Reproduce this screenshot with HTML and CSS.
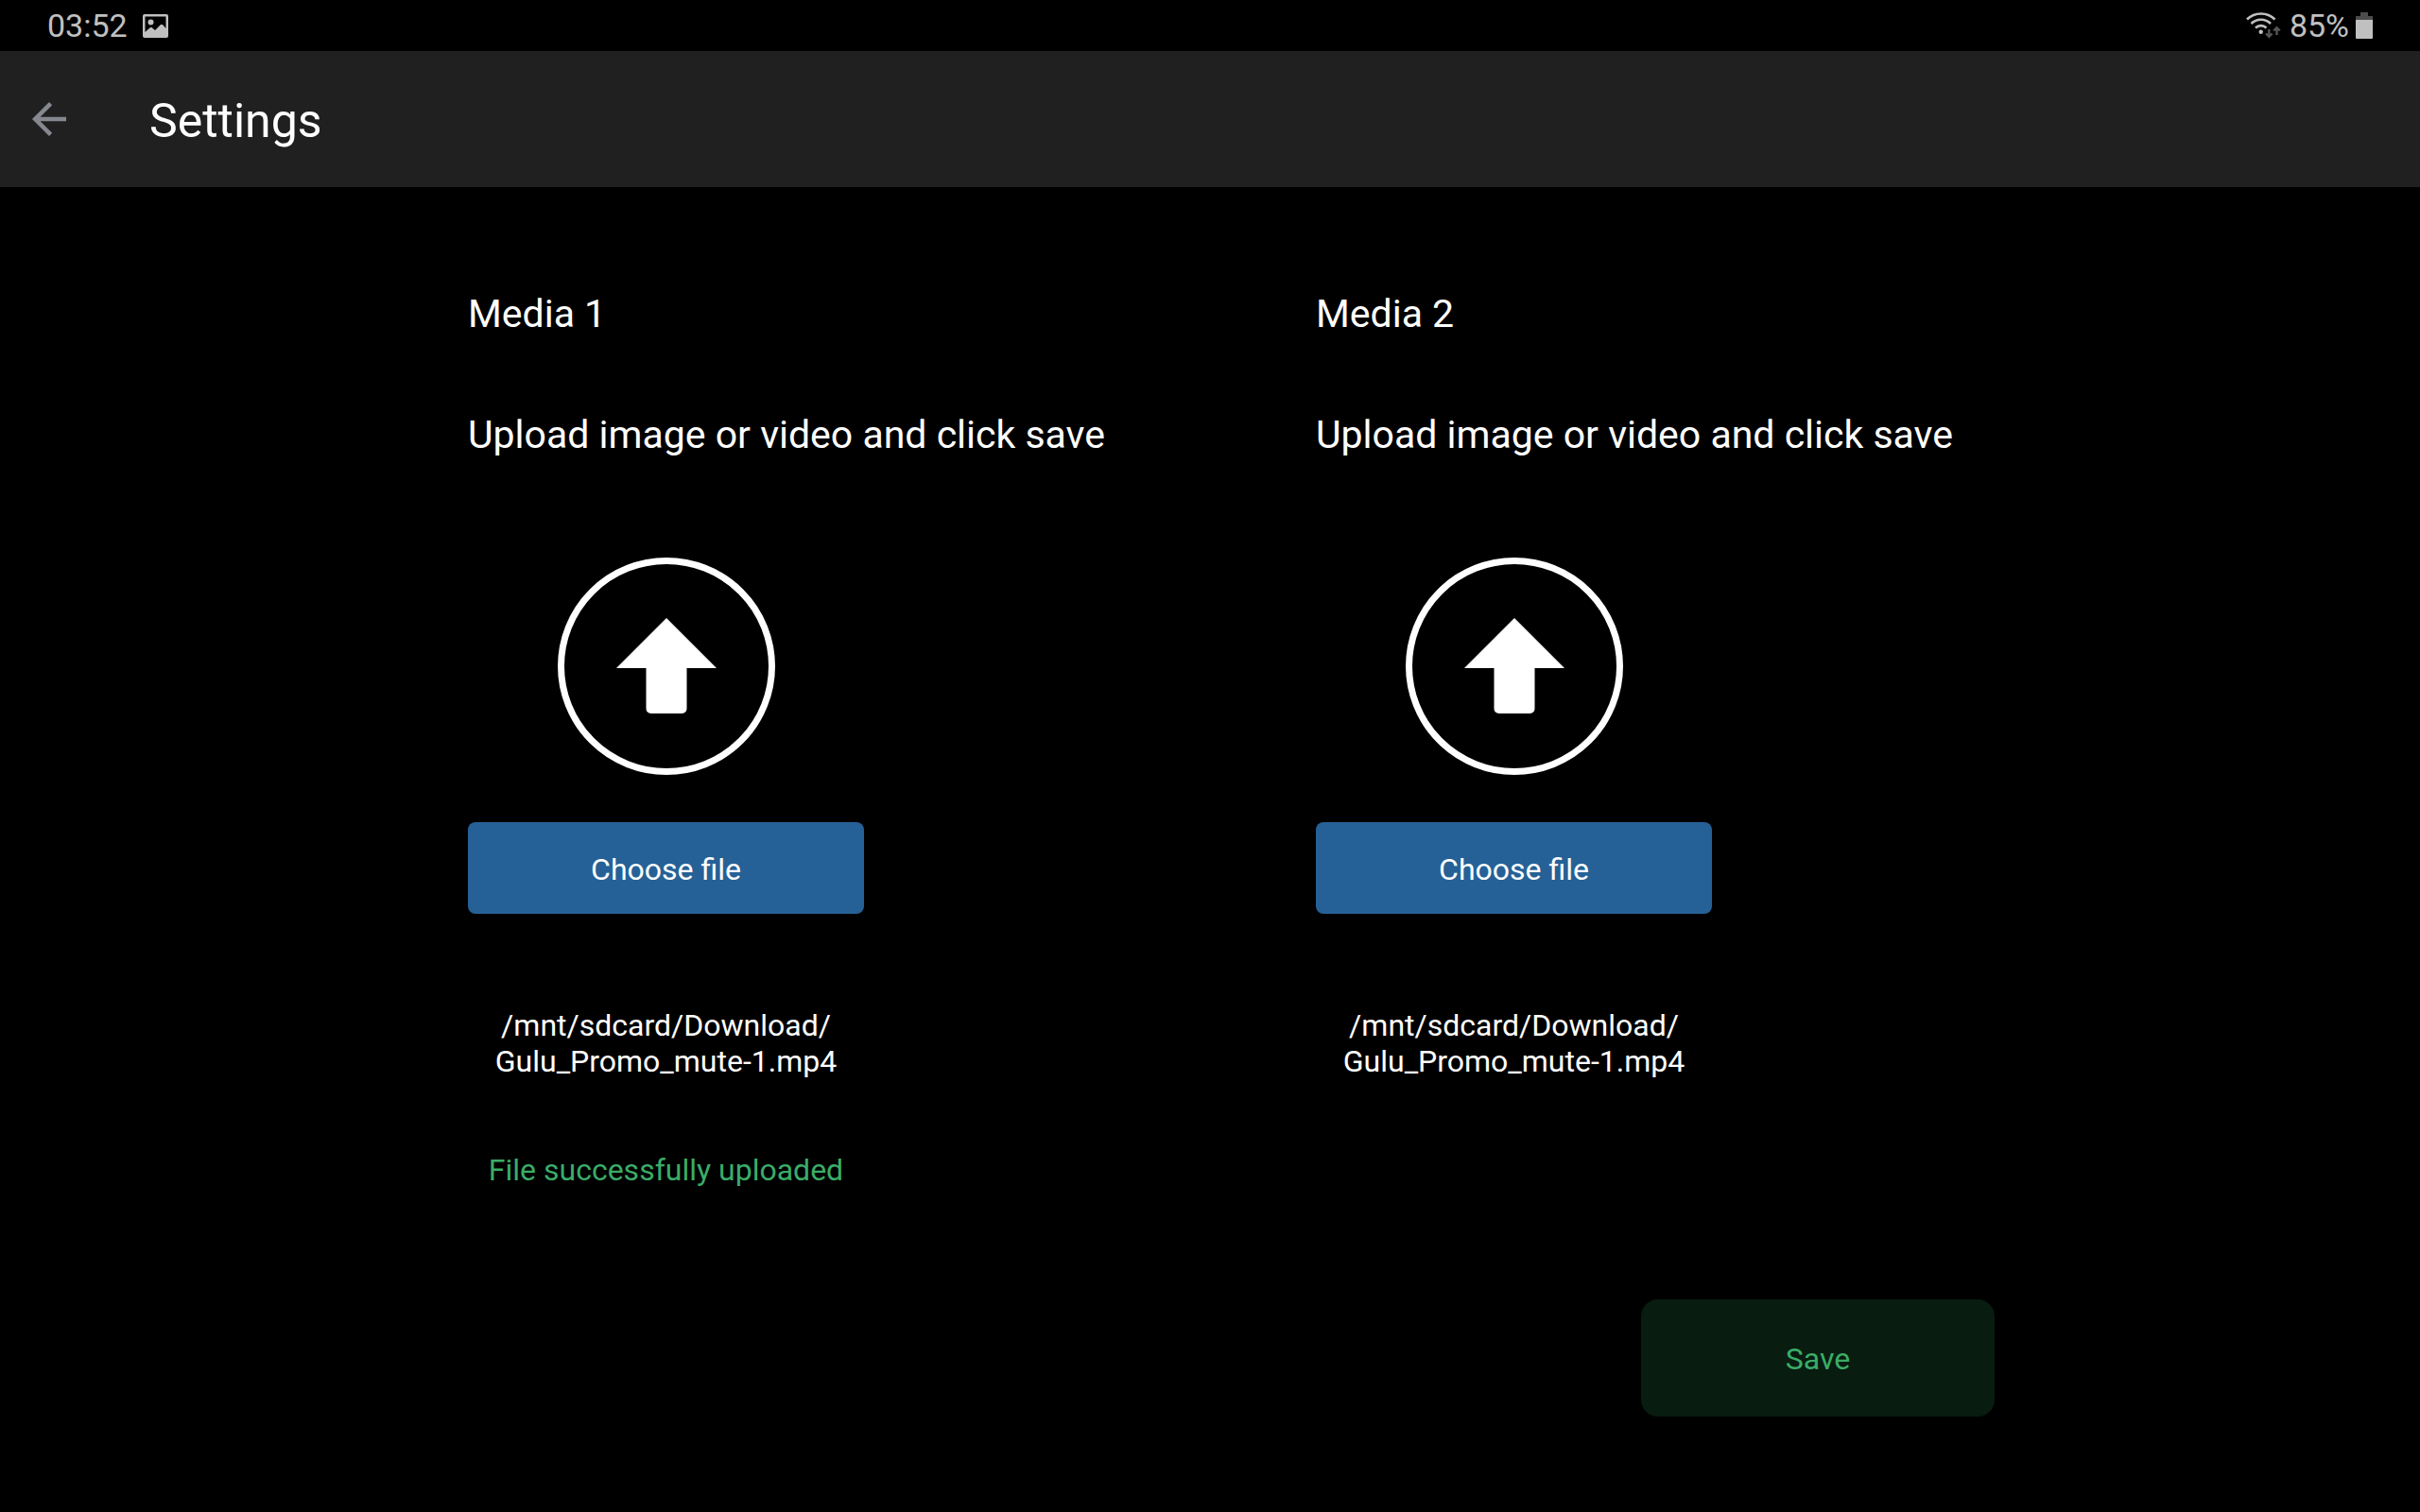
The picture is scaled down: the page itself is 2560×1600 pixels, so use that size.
FILE: index.html
```html
<!DOCTYPE html>
<html lang="en">
<head>
    <meta charset="UTF-8">
    <meta name="viewport" content="width=device-width, initial-scale=1.0">
    <title>Settings</title>
    <link rel="stylesheet" href="styles.css">
</head>
<body>
    <div class="status-bar">
        <div class="status-group">
            <span>03:52</span>
            <svg class="picture-icon" viewBox="0 0 27 25" width="27" height="25">
                <path fill="#c0c0c0" fill-rule="evenodd" d="M2 0h23a2 2 0 0 1 2 2v21a2 2 0 0 1-2 2H2a2 2 0 0 1-2-2V2a2 2 0 0 1 2-2zM2.500 2.500v16.500l5.500-5 1.500 0 3.500 3 6-6 2 0 3.500 4V2.500z"/>
                <circle cx="8.500" cy="8.500" r="3" fill="#c0c0c0"/>
            </svg>
        </div>
        <div class="status-group right">
            <svg viewBox="0 0 39 28" width="39" height="28">
                <g fill="none" stroke="#c0c0c0" stroke-width="2.600">
                    <path d="M1 7.500a21 21 0 0 1 29.500 0"/>
                    <path d="M5.500 12a14.500 14.500 0 0 1 20.500 0"/>
                    <path d="M10 16.500a8.200 8.200 0 0 1 11.500 0"/>
                </g>
                <circle cx="15.700" cy="20.700" r="2.200" fill="#c0c0c0"/>
                <path fill="none" stroke="#555" stroke-width="2.400" d="M24.300 18v7.500M21 22.500l3.300 3.300 3.300-3.300M32.500 24v-7.500M29.200 19.500l3.300-3.300 3.300 3.300"/>
            </svg>
            <span>85%</span>
            <svg class="battery-icon" viewBox="0 0 18 28" width="18" height="28">
                <path fill="#4c4c4c" d="M5 0h8v4h5v4H0V4h5z"/>
                <path fill="#c0c0c0" d="M0 8h18v19a1 1 0 0 1-1 1H1a1 1 0 0 1-1-1z"/>
            </svg>
        </div>
    </div>

    <header class="header">
        <button class="back-button" aria-label="Back">
            <svg viewBox="0 0 24 24" width="54" height="54">
                <path fill="#85888f" d="M20 11H7.830l5.590-5.590L12 4l-8 8 8 8 1.410-1.410L7.830 13H20v-2z"/>
            </svg>
        </button>
        <h1>Settings</h1>
    </header>

    <main class="container">
        <div class="media-list">
            <section class="media">
                <h2>Media 1</h2>
                <p class="hint">Upload image or video and click save</p>
                <div class="upload">
                    <svg class="upload-icon" viewBox="0 0 230 230" width="230" height="230">
                        <circle cx="115" cy="115" r="111.500" fill="none" stroke="#fff" stroke-width="7"/>
                        <path fill="#fff" d="M115 64l53 53h-31.500v43a5 5 0 0 1-5 5h-33a5 5 0 0 1-5-5v-43H62z"/>
                    </svg>
                    <button class="choose-button">Choose file</button>
                    <p class="file-path">/mnt/sdcard/Download/<wbr>Gulu_Promo_mute-1.mp4</p>
                    <p class="message">File successfully uploaded</p>
                </div>
            </section>
            <section class="media">
                <h2>Media 2</h2>
                <p class="hint">Upload image or video and click save</p>
                <div class="upload">
                    <svg class="upload-icon" viewBox="0 0 230 230" width="230" height="230">
                        <circle cx="115" cy="115" r="111.500" fill="none" stroke="#fff" stroke-width="7"/>
                        <path fill="#fff" d="M115 64l53 53h-31.500v43a5 5 0 0 1-5 5h-33a5 5 0 0 1-5-5v-43H62z"/>
                    </svg>
                    <button class="choose-button">Choose file</button>
                    <p class="file-path">/mnt/sdcard/Download/<wbr>Gulu_Promo_mute-1.mp4</p>
                </div>
            </section>
        </div>
        <div class="actions">
            <button class="save-button">Save</button>
        </div>
    </main>
</body>
</html>
```
FILE: styles.css
```css
* {
    box-sizing: border-box;
}

body {
    margin: 0;
    background-color: #000;
    color: #fff;
    font-family: Roboto, sans-serif;
    font-size: 32px;
    line-height: 38px;
}

h1, h2, p {
    margin: 0;
    font-weight: normal;
}

svg {
    display: block;
}

button {
    border: none;
    padding: 0;
    font: inherit;
    cursor: pointer;
}

.status-bar {
    display: flex;
    justify-content: space-between;
    align-items: center;
    height: 54px;
    padding: 0 50px;
    color: #c0c0c0;
    font-size: 34px;
}

.status-group {
    display: flex;
    align-items: center;
    gap: 16px;
}

.status-group.right {
    gap: 7px;
}

.header {
    display: flex;
    align-items: center;
    gap: 79px;
    height: 144px;
    padding: 0 25px;
    background-color: #202020;
}

.back-button {
    background: none;
}

.header h1 {
    padding-top: 4px;
    font-size: 50px;
    line-height: 58px;
}

.container {
    padding: 109px 15% 0;
}

.media-list {
    display: grid;
    grid-template-columns: 1fr 1fr;
    column-gap: 2px;
}

.media {
    padding-left: 111px;
}

.media h2,
.hint {
    font-size: 41px;
    line-height: 50px;
}

.hint {
    margin-top: 78px;
}

.upload {
    display: flex;
    flex-direction: column;
    align-items: center;
    width: 419px;
    margin-top: 105px;
    text-align: center;
}

.choose-button,
.save-button {
    padding-top: 2px;
}

.choose-button {
    width: 100%;
    height: 97px;
    margin-top: 50px;
    border-radius: 8px;
    background-color: #256196;
    color: #fff;
}

.file-path {
    margin-top: 99px;
}

.message {
    margin-top: 77px;
    color: #3bac68;
}

.actions {
    display: flex;
    justify-content: flex-end;
    margin-top: 118px;
    padding-right: 66px;
}

.save-button {
    width: 374px;
    height: 124px;
    border-radius: 18px;
    background-color: #081c10;
    color: #3bac68;
}
```
